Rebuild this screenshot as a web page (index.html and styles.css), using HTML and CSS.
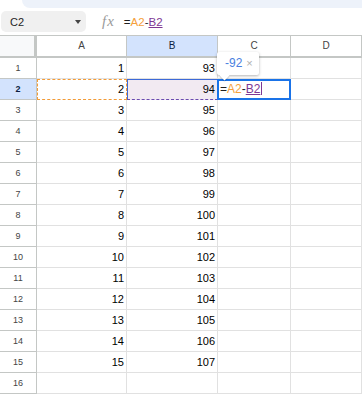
FILE: index.html
```html
<!DOCTYPE html>
<html lang="en">
<head>
    <meta charset="UTF-8">
    <meta name="viewport" content="width=device-width, initial-scale=1.0">
    <title>Sheet</title>
    <link rel="stylesheet" href="styles.css">
</head>
<body>

<div class="top-edge"></div>

<div class="formula-bar">
    <div class="name-box"><span>C2</span><span class="caret"></span></div>
    <div class="fx">fx</div>
    <div class="formula">=<span class="ref-a">A2</span>-<span class="ref-b">B2</span></div>
</div>

<div class="sheet">
    <div class="row head">
        <div class="corner"></div>
        <div class="col-h">A</div>
        <div class="col-h sel">B</div>
        <div class="col-h">C</div>
        <div class="col-h">D</div>
    </div>
    <div class="row"><div class="row-h">1</div><div class="cell">1</div><div class="cell">93</div><div class="cell"></div><div class="cell"></div></div>
    <div class="row">
        <div class="row-h sel">2</div>
        <div class="cell range-a">2</div>
        <div class="cell range-b">94</div>
        <div class="cell active">
            <div class="hint"><span class="hint-val">-92</span><span class="hint-x">×</span></div>
            <div class="editor">=<span class="ref-a">A2</span>-<span class="ref-b">B2</span><span class="cursor"></span></div>
        </div>
        <div class="cell"></div>
    </div>
    <div class="row"><div class="row-h">3</div><div class="cell">3</div><div class="cell">95</div><div class="cell"></div><div class="cell"></div></div>
    <div class="row"><div class="row-h">4</div><div class="cell">4</div><div class="cell">96</div><div class="cell"></div><div class="cell"></div></div>
    <div class="row"><div class="row-h">5</div><div class="cell">5</div><div class="cell">97</div><div class="cell"></div><div class="cell"></div></div>
    <div class="row"><div class="row-h">6</div><div class="cell">6</div><div class="cell">98</div><div class="cell"></div><div class="cell"></div></div>
    <div class="row"><div class="row-h">7</div><div class="cell">7</div><div class="cell">99</div><div class="cell"></div><div class="cell"></div></div>
    <div class="row"><div class="row-h">8</div><div class="cell">8</div><div class="cell">100</div><div class="cell"></div><div class="cell"></div></div>
    <div class="row"><div class="row-h">9</div><div class="cell">9</div><div class="cell">101</div><div class="cell"></div><div class="cell"></div></div>
    <div class="row"><div class="row-h">10</div><div class="cell">10</div><div class="cell">102</div><div class="cell"></div><div class="cell"></div></div>
    <div class="row"><div class="row-h">11</div><div class="cell">11</div><div class="cell">103</div><div class="cell"></div><div class="cell"></div></div>
    <div class="row"><div class="row-h">12</div><div class="cell">12</div><div class="cell">104</div><div class="cell"></div><div class="cell"></div></div>
    <div class="row"><div class="row-h">13</div><div class="cell">13</div><div class="cell">105</div><div class="cell"></div><div class="cell"></div></div>
    <div class="row"><div class="row-h">14</div><div class="cell">14</div><div class="cell">106</div><div class="cell"></div><div class="cell"></div></div>
    <div class="row"><div class="row-h">15</div><div class="cell">15</div><div class="cell">107</div><div class="cell"></div><div class="cell"></div></div>
    <div class="row"><div class="row-h">16</div><div class="cell"></div><div class="cell"></div><div class="cell"></div><div class="cell"></div></div>
</div>

</body>
</html>
```

FILE: styles.css
```css
body {
    margin: 0;
    padding: 0;
    font-family: "Liberation Sans", Arial, sans-serif;
    background: #fff;
    overflow: hidden;
}

.top-edge {
    height: 8px;
    margin-left: 22px;
    background-color: #edf2fa;
    border-bottom-left-radius: 10px;
}

.formula-bar {
    display: flex;
    align-items: center;
    height: 27px;
}

.name-box {
    display: flex;
    align-items: center;
    justify-content: space-between;
    box-sizing: border-box;
    width: 85px;
    height: 21px;
    margin-left: 1px;
    padding: 0 5px 0 9px;
    background-color: #f0f0f0;
    border-radius: 5px;
    font-size: 11px;
    color: #1f1f1f;
}

.caret {
    width: 0;
    height: 0;
    border-left: 3.5px solid transparent;
    border-right: 3.5px solid transparent;
    border-top: 4px solid #444;
}

.fx {
    margin-left: 16px;
    font-family: "Liberation Serif", serif;
    font-style: italic;
    font-size: 15px;
    letter-spacing: 1px;
    color: #9a9a9a;
}

.formula {
    margin-left: 9px;
    font-size: 11.5px;
    color: #1f1f1f;
}

.ref-a {
    color: #f5a03c;
}

.ref-b {
    color: #7e3794;
    text-decoration: underline;
}

.sheet {
    border-top: 1px solid #c4c7c5;
}

.row {
    display: grid;
    grid-template-columns: 37px 90px 91px 73px 1fr;
    height: 21px;
}

.row > div {
    box-sizing: border-box;
    border-right: 1px solid #e1e1e1;
    border-bottom: 1px solid #e1e1e1;
}

.row.head {
    height: 22px;
}

.corner {
    background-color: #f8f9fa;
    border-right: 3px solid #c4c7c5 !important;
    border-bottom: 2px solid #c4c7c5 !important;
}

.col-h {
    text-align: center;
    font-size: 10px;
    line-height: 20px;
    color: #444;
    border-right-color: #c4c7c5 !important;
    border-bottom: 2px solid #c4c7c5 !important;
}

.col-h.sel {
    background-color: #d3e3fd;
    color: #0b1e3f;
}

.row-h {
    text-align: center;
    font-size: 9px;
    line-height: 20px;
    color: #444;
    border-color: #c4c7c5 !important;
}

.row-h.sel {
    background-color: #d3e3fd;
    color: #0b1e3f;
    font-weight: bold;
}

.cell {
    text-align: right;
    padding-right: 2px;
    font-size: 11px;
    line-height: 20px;
    color: #000;
}

.cell.range-a {
    border: 1px dashed #f29b37;
    line-height: 19px;
}

.cell.range-b {
    background-color: #f2eaf2;
    border: 1px solid #3d6ad8;
    border-bottom: 1px dashed #6a4bb0;
    line-height: 19px;
}

.cell.active {
    position: relative;
}

.editor {
    position: absolute;
    left: -1px;
    top: 0;
    box-sizing: border-box;
    width: 74px;
    height: 21px;
    padding-left: 1px;
    border: 2px solid #1a73e8;
    background: #fff;
    text-align: left;
    font-size: 12px;
    line-height: 17px;
    color: #1f1f1f;
    z-index: 2;
}

.cursor {
    display: inline-block;
    width: 1px;
    height: 13px;
    margin-left: 1px;
    vertical-align: -2px;
    background-color: #7e3794;
}

.hint {
    position: absolute;
    left: -1px;
    top: -27px;
    box-sizing: border-box;
    width: 42px;
    height: 23px;
    padding-left: 8px;
    background: #fff;
    border-radius: 2px;
    box-shadow: 0 1px 3px rgba(0, 0, 0, 0.3);
    text-align: left;
    font-size: 12px;
    line-height: 23px;
    z-index: 3;
}

.hint::after {
    content: "";
    position: absolute;
    left: 4px;
    bottom: -4px;
    width: 7px;
    height: 7px;
    background: #fff;
    transform: rotate(45deg);
    box-shadow: 1px 1px 1px rgba(0, 0, 0, 0.15);
}

.hint-val {
    color: #4a7fe0;
}

.hint-x {
    margin-left: 4px;
    font-size: 11px;
    color: #b0b0b0;
}
```
